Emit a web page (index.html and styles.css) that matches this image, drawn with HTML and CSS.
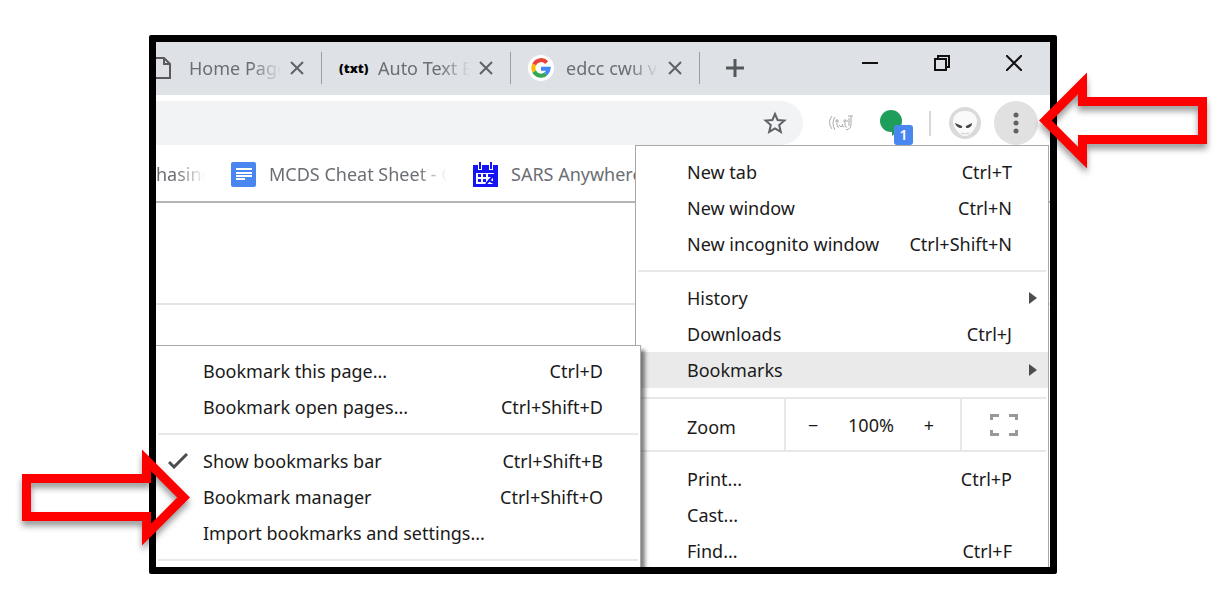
FILE: index.html
```html
<!DOCTYPE html>
<html lang="en">
<head>
  <meta charset="UTF-8">
  <meta name="viewport" content="width=device-width, initial-scale=1.0">
  <title>Bookmark manager menu</title>
  <link rel="stylesheet" href="styles.css">
</head>
<body>

  <div class="browser">
    <header class="tab-strip">
      <div class="tab tab-first">
        <svg class="page-icon" viewBox="0 0 16 24" width="16" height="24" fill="none" stroke="#5a5a5a" stroke-width="2"><path d="M0 2h8l6 6v14H0M8 2v6h6"/></svg>
        <span class="tab-title">Home Page</span>
        <button class="tab-close" aria-label="Close Home Page"><svg viewBox="0 0 14 14" width="14" height="14"><path d="M1 1l12 12M13 1L1 13"/></svg></button>
      </div>
      <div class="tab">
        <span class="txt-icon">(txt)</span>
        <span class="tab-title">Auto Text E</span>
        <button class="tab-close" aria-label="Close Auto Text"><svg viewBox="0 0 14 14" width="14" height="14"><path d="M1 1l12 12M13 1L1 13"/></svg></button>
      </div>
      <div class="tab">
        <svg class="google-icon" viewBox="0 0 26 26" width="26" height="26">
          <circle cx="13" cy="13" r="13" fill="#fff"/>
          <g fill="none" stroke-width="4">
            <path d="M18.700 7.600A7.600 7.600 0 0 0 6.200 9.500" stroke="#ea4335"/>
            <path d="M6.200 9.500a7.600 7.600 0 0 0 0 7" stroke="#fbbc05"/>
            <path d="M6.200 16.500a7.600 7.600 0 0 0 11.700 2.400" stroke="#34a853"/>
            <path d="M17.900 18.900a7.600 7.600 0 0 0 2.700-5.200H13" stroke="#4285f4"/>
          </g>
        </svg>
        <span class="tab-title">edcc cwu v</span>
        <button class="tab-close" aria-label="Close edcc cwu"><svg viewBox="0 0 14 14" width="14" height="14"><path d="M1 1l12 12M13 1L1 13"/></svg></button>
      </div>
      <button class="new-tab" aria-label="New tab"><svg viewBox="0 0 20 20" width="20" height="20"><path d="M10 1v18M1 10h18" stroke="#54575a" stroke-width="3"/></svg></button>
      <div class="window-controls">
        <button aria-label="Minimize"><svg viewBox="0 0 16 16" width="16" height="16"><path d="M0 8h16"/></svg></button>
        <button aria-label="Restore"><svg viewBox="0 0 16 16" width="16" height="16"><path d="M1 4h11v11H1zM4 4V1h11v11h-3"/></svg></button>
        <button aria-label="Close"><svg viewBox="0 0 16 16" width="16" height="16"><path d="M0 0l16 16M16 0L0 16"/></svg></button>
      </div>
    </header>

    <div class="toolbar">
      <div class="omnibox">
        <input type="text" aria-label="Address">
        <button class="star" aria-label="Bookmark this page"><svg viewBox="0 0 24 24" width="24" height="24" fill="none" stroke="#5f6368" stroke-width="2"><path d="M12 3l2.600 6 6.800.600-5.200 4.500 1.600 6.700-5.800-3.500-5.800 3.500 1.600-6.700L2.600 9.600 9.400 9z"/></svg></button>
      </div>
      <button class="ext ext-txt" aria-label="Auto Text"><svg viewBox="0 0 26 16" width="26" height="16" fill="none" stroke="#aaa"><path d="M4 1Q-1 7 4 14M7 2Q3 8 7 15M9 4v6q0 3 2 2M7 6h4M11 10l2 2 2-3M14 11l2 1M17 4v7q1 2 2 1M15 6h5M20 1h5M23 1v9q0 4-5 5M21 3v8"/></svg></button>
      <button class="ext hangouts" aria-label="Hangouts">
        <svg viewBox="0 0 22 26" width="22" height="26" fill="#1e9e5a"><circle cx="11" cy="11" r="11"/><path d="M12 20v6q6-4 8-9z"/></svg>
        <span class="badge">1</span>
      </button>
      <span class="divider"></span>
      <button class="ext avatar" aria-label="Profile"><svg viewBox="0 0 32 32" width="32" height="32"><circle cx="16" cy="16" r="16" fill="#dadada"/><path d="M16 4c-8 0-12 5-12 10 0 7 7 15 12 15s12-8 12-15c0-5-4-10-12-10z" fill="#fafafa"/><path d="M6 16l7 3q1 2-2 2-4-1-5-5zM23 16l-6 3q-1 2 2 2 4-1 4-5z" fill="#444"/><path d="M12 26q4 2 8 0" fill="none" stroke="#ccc"/></svg></button>
      <button class="ext more" aria-label="Customize and control"><svg viewBox="0 0 6 22" width="6" height="22" fill="#5f6368"><circle cx="3" cy="3" r="2.500"/><circle cx="3" cy="11" r="2.500"/><circle cx="3" cy="19" r="2.500"/></svg></button>
    </div>

    <nav class="bookmarks-bar">
      <a href="#" class="bm bm-first"><span>hasing</span></a>
      <a href="#" class="bm bm-docs">
        <svg viewBox="0 0 25 25" width="25" height="25"><rect width="25" height="25" rx="2" fill="#4a86f0"/><path d="M5 7h16M5 11h16M5 14h16M5 17h9" stroke="#fff" stroke-width="2"/></svg>
        <span>MCDS Cheat Sheet - G</span>
      </a>
      <a href="#" class="bm bm-sars">
        <svg viewBox="0 0 25 25" width="25" height="25"><path d="M0 3h25v22H0z" fill="#1414f5"/><path d="M3 11h19v11H3z" fill="#fff"/><path d="M5 0h4v8H5zM16 0h4v8h-4z" fill="#fff"/><path d="M6 0h2v7H6zM17 0h2v7h-2zM5 12h3v3H5zM10 12h3v3h-3zM15 12h6v3h-6zM5 17h3v3H5zM10 17h3v3h-3z" fill="#1414f5"/><path d="M13 22l8-9v9M15 18l6 3" stroke="#1414f5" stroke-width="2" fill="none"/></svg>
        <span>SARS Anywhere</span>
      </a>
    </nav>

    <main class="page">
      <div class="page-header"></div>
    </main>

    <div class="menu main-menu">
      <button class="item"><span>New tab</span><kbd>Ctrl+T</kbd></button>
      <button class="item"><span>New window</span><kbd>Ctrl+N</kbd></button>
      <button class="item"><span>New incognito window</span><kbd>Ctrl+Shift+N</kbd></button>
      <hr>
      <button class="item has-sub"><span>History</span></button>
      <button class="item"><span>Downloads</span><kbd>Ctrl+J</kbd></button>
      <button class="item has-sub active"><span>Bookmarks</span></button>
      <div class="zoom">
        <span class="zoom-label">Zoom</span>
        <div class="zoom-controls">
          <button aria-label="Zoom out">−</button>
          <span>100%</span>
          <button aria-label="Zoom in">+</button>
        </div>
        <button class="fullscreen" aria-label="Full screen"><svg viewBox="0 0 28 22" width="28" height="22" fill="none" stroke="#999" stroke-width="3"><path d="M1.500 6V1.500H9M19 1.500h7.500V6M26.500 16v4.500H19M9 20.500H1.500V16"/></svg></button>
      </div>
      <button class="item"><span>Print...</span><kbd>Ctrl+P</kbd></button>
      <button class="item"><span>Cast...</span></button>
      <button class="item"><span>Find...</span><kbd>Ctrl+F</kbd></button>
    </div>

    <div class="menu sub-menu">
      <button class="item"><span>Bookmark this page...</span><kbd>Ctrl+D</kbd></button>
      <button class="item"><span>Bookmark open pages...</span><kbd>Ctrl+Shift+D</kbd></button>
      <hr>
      <button class="item checked">
        <svg class="check" viewBox="0 0 20 16" width="20" height="16" fill="none" stroke="#4d4d4d" stroke-width="3"><path d="M1 9l5 5L19 1"/></svg>
        <span>Show bookmarks bar</span><kbd>Ctrl+Shift+B</kbd>
      </button>
      <button class="item"><span>Bookmark manager</span><kbd>Ctrl+Shift+O</kbd></button>
      <button class="item"><span>Import bookmarks and settings...</span></button>
      <hr>
    </div>
  </div>

  <!-- callout arrows -->
  <svg class="arrow arrow-menu" viewBox="0 0 168 97" width="168" height="97"><path d="M6.400 48.500L43.500 11.400V29.500H163.500V67.500H43.500V85.600z"/></svg>
  <svg class="arrow arrow-manager" viewBox="0 0 168 97" width="168" height="97"><path d="M161.600 48.500L124.500 11.400V29.500H4.500V67.500H124.500V85.600z"/></svg>

</body>
</html>
```
FILE: styles.css
```css
* {
  box-sizing: border-box;
}
body {
  margin: 0;
  padding: 35px 164px 28px 149px;
  min-height: 100vh;
  position: relative;
  display: flex;
  background: #fff;
  font-family: "Noto Sans", "Open Sans", sans-serif;
  font-size: 18px;
  line-height: 24px;
  color: #1a1a1a;
}
button {
  border: none;
  padding: 0;
  background: none;
  font: inherit;
  color: inherit;
}
svg {
  display: block;
  flex: none;
}
.browser {
  flex: 1;
  min-width: 0;
  display: flex;
  flex-direction: column;
  position: relative;
  overflow: hidden;
  border: 7px solid #000;
  border-radius: 2px;
  background: #fff;
}

/* tabs */
.tab-strip {
  display: flex;
  align-items: center;
  height: 53px;
  padding-bottom: 1px;
  background: #dee1e6;
  color: #6b6e73;
}
.tab {
  display: flex;
  align-items: center;
  width: 189px;
  height: 32px;
  padding: 0 17px;
  border-right: 1px solid #9a9da1;
}
.tab-first {
  width: 166px;
  padding-left: 0;
}
.tab-title {
  flex: 1;
  width: 0;
  margin: 0 9px 0 12px;
  white-space: nowrap;
  -webkit-mask-image: linear-gradient(to left, transparent, #000 30px);
  mask-image: linear-gradient(to left, transparent, #000 30px);
}
.tab-first .tab-title {
  margin-left: 17px;
}
.tab-close svg {
  stroke: #5f6368;
  stroke-width: 2;
}
.txt-icon {
  width: 27px;
  font-family: "Open Sans", "Noto Sans", sans-serif;
  font-size: 13px;
  font-weight: 800;
  color: #000;
}
.new-tab {
  margin-left: 25px;
}
.window-controls {
  display: flex;
  gap: 56px;
  margin-left: auto;
  margin-right: 28px;
  padding-bottom: 10px;
}
.window-controls svg {
  fill: none;
  stroke: #111;
  stroke-width: 2;
}

/* address bar */
.toolbar {
  display: flex;
  align-items: center;
  height: 56px;
  padding-right: 12px;
}
.omnibox {
  flex: 1;
  display: flex;
  align-items: center;
  height: 44px;
  padding-right: 16px;
  border-radius: 0 22px 22px 0;
  background: #f1f3f4;
}
.omnibox input {
  flex: 1;
  min-width: 0;
  border: none;
  outline: none;
  background: none;
  font: inherit;
}
.ext {
  position: relative;
}
.ext-txt {
  margin-left: 25px;
}
.hangouts {
  margin-left: 26px;
}
.badge {
  position: absolute;
  left: 14px;
  top: 15px;
  width: 19px;
  height: 20px;
  border-radius: 3px;
  background: #4a86f0;
  color: #fff;
  font-size: 14px;
  font-weight: 600;
  line-height: 20px;
}
.divider {
  width: 2px;
  height: 25px;
  margin: 0 18px 0 27px;
  background: #d5d7da;
}
.more {
  display: flex;
  align-items: center;
  justify-content: center;
  width: 44px;
  height: 44px;
  margin-left: 13px;
  border-radius: 50%;
  background: #e1e1e1;
}

/* bookmarks bar */
.bookmarks-bar {
  display: flex;
  align-items: center;
  height: 52px;
  padding-bottom: 4px;
  border-bottom: 2px solid #b5b5b5;
}
.bm {
  display: flex;
  align-items: center;
  gap: 13px;
  flex: none;
  color: #6b6e73;
  text-decoration: none;
  white-space: nowrap;
}
.bm-first {
  width: 49px;
  margin-right: 26px;
}
.bm-docs {
  width: 216px;
  margin-right: 26px;
}
.bm-first span,
.bm-docs span {
  flex: 1;
  width: 0;
  -webkit-mask-image: linear-gradient(to left, transparent, #000 30px);
  mask-image: linear-gradient(to left, transparent, #000 30px);
}
.page {
  flex: 1;
}
.page-header {
  height: 102px;
  border-bottom: 2px solid #e4e4e4;
}

/* menus */
.menu {
  position: absolute;
  display: flex;
  flex-direction: column;
  border: 1px solid #a9a9a9;
  background: #fff;
}
.main-menu {
  top: 103px;
  right: 1px;
  width: 414px;
  padding: 8px 0;
}
.sub-menu {
  top: 303px;
  left: 0;
  right: 409px;
  padding: 7px 0;
  border-left: none;
  box-shadow: 4px 5px 4px rgba(0, 0, 0, 0.5);
}
.item {
  display: flex;
  align-items: center;
  justify-content: space-between;
  flex: none;
  height: 36px;
  padding: 0 36px 0 51px;
  position: relative;
  text-align: left;
  white-space: nowrap;
}
.sub-menu .item {
  padding: 0 37px 0 47px;
}
.item.active {
  background: #eaeaea;
}
kbd {
  font: inherit;
}
.has-sub::after {
  content: "";
  position: absolute;
  right: 11px;
  border: 6px solid transparent;
  border-left: 8px solid #4d4d4d;
  border-right: none;
}
.check {
  position: absolute;
  left: 12px;
}
hr {
  flex: none;
  width: auto;
  height: 2px;
  margin: 8px 2px;
  border: none;
  background: #e8e8e8;
}
.zoom {
  display: flex;
  height: 55px;
  margin: 9px 2px;
  border-top: 2px solid #e8e8e8;
  border-bottom: 2px solid #e8e8e8;
}
.zoom-label {
  flex: 1;
  padding-left: 49px;
  line-height: 56px;
}
.zoom-controls {
  display: flex;
  align-items: center;
  justify-content: space-between;
  width: 178px;
  padding: 0 26px 0 22px;
  border-left: 2px solid #e8e8e8;
  border-right: 2px solid #e8e8e8;
}
.fullscreen {
  display: flex;
  align-items: center;
  justify-content: center;
  width: 84px;
}

/* callouts */
.arrow {
  position: absolute;
  overflow: visible;
  fill: none;
  stroke: #f00;
  stroke-width: 9;
  filter: drop-shadow(0 5px 3px rgba(0, 0, 0, 0.4));
}
.arrow-menu {
  top: 72px;
  right: 14px;
}
.arrow-manager {
  top: 449px;
  left: 22px;
}
```
